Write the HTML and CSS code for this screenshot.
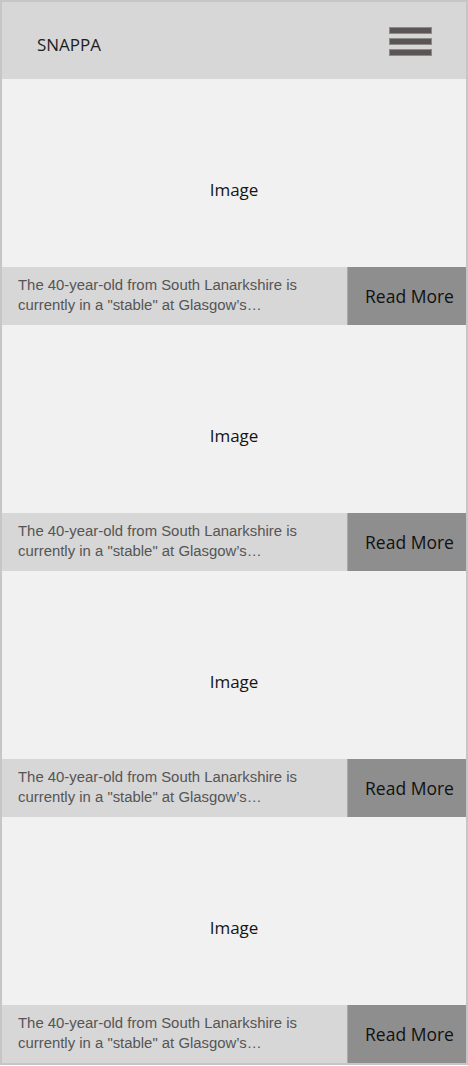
FILE: index.html
```html
<!DOCTYPE html>
<html>
<head>
<meta charset="utf-8">
<link rel="stylesheet" href="styles.css">
</head>
<body>
<div class="frame">
  <header class="header">
    <div class="brand">SNAPPA</div>
    <div class="burger"><span></span><span></span><span></span></div>
  </header>
  <div class="card">
    <div class="image">Image</div>
    <div class="bar">
      <p class="desc">The 40-year-old from South Lanarkshire is currently in a "stable" at Glasgow’s…</p>
      <div class="more">Read More</div>
    </div>
  </div>
  <div class="card">
    <div class="image">Image</div>
    <div class="bar">
      <p class="desc">The 40-year-old from South Lanarkshire is currently in a "stable" at Glasgow’s…</p>
      <div class="more">Read More</div>
    </div>
  </div>
  <div class="card">
    <div class="image">Image</div>
    <div class="bar">
      <p class="desc">The 40-year-old from South Lanarkshire is currently in a "stable" at Glasgow’s…</p>
      <div class="more">Read More</div>
    </div>
  </div>
  <div class="card">
    <div class="image">Image</div>
    <div class="bar">
      <p class="desc">The 40-year-old from South Lanarkshire is currently in a "stable" at Glasgow’s…</p>
      <div class="more">Read More</div>
    </div>
  </div>
</div>
</body>
</html>
```
FILE: styles.css
```css
html, body {
  margin: 0;
  padding: 0;
  background: #ffffff;
}
.frame {
  width: 468px;
  box-sizing: border-box;
  border: 2px solid #c6c6c6;
  background: #f1f1f1;
  display: flex;
  flex-direction: column;
}
.header {
  height: 77px;
  flex: none;
  background: #d7d7d7;
  display: flex;
  align-items: center;
  justify-content: space-between;
  padding: 0 34px 0 35px;
}
.brand {
  font-family: "Open Sans", sans-serif;
  font-size: 17px;
  color: #1e1e1e;
  margin-top: 7px;
}
.burger {
  display: flex;
  flex-direction: column;
  gap: 4px;
  margin-top: 2px;
}
.burger span {
  display: block;
  width: 41px;
  height: 5px;
  background: #5b5555;
  border: 1px solid #8f8a8a;
}
.card {
  display: flex;
  flex-direction: column;
  flex: none;
}
.image {
  height: 188px;
  flex: none;
  display: flex;
  align-items: center;
  justify-content: center;
  font-family: "Open Sans", sans-serif;
  font-size: 17px;
  color: #151515;
  padding-top: 33px;
  box-sizing: border-box;
}
.bar {
  height: 58px;
  flex: none;
  display: flex;
  background: #d7d7d7;
}
.desc {
  flex: 1;
  margin: 0;
  padding: 8px 0 0 16px;
  font-family: "Liberation Sans", Arial, sans-serif;
  font-size: 14.9px;
  line-height: 20px;
  color: #555555;
}
.more {
  width: 119px;
  background: #8e8e8e;
  border-left: 1px solid #a9a9a9;
  display: flex;
  align-items: center;
  justify-content: center;
  font-family: "Open Sans", sans-serif;
  font-size: 17.5px;
  color: #111111;
  padding-left: 5px;
  box-sizing: border-box;
}
```
